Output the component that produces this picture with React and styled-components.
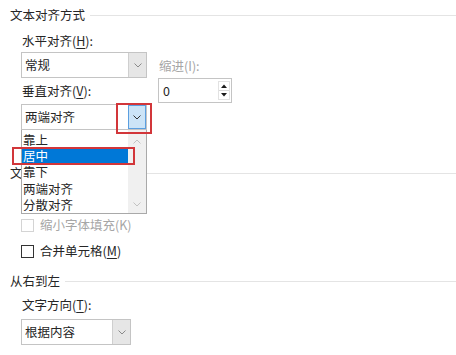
import React from "react";
import styled, { createGlobalStyle } from "styled-components";

const Global = createGlobalStyle`
  html, body { margin: 0; padding: 0; background: #ffffff; }
  body { font-family: "Noto Sans CJK SC", "Noto Sans", sans-serif; }
`;

const Page = styled.div`
  width: 456px;
  height: 355px;
  overflow: hidden;
  box-sizing: border-box;
  padding: 6px 0 0 10px;
  background: #ffffff;
  color: #262626;
  font-size: 12.5px;
  line-height: 18px;
  position: relative;
`;

const SectionTitle = styled.div`
  display: flex;
  align-items: center;
  gap: 5px;
  height: 18px;
  margin-top: ${(p) => p.$mt || 0}px;
  white-space: nowrap;
  &::after {
    content: "";
    flex: 1;
    height: 1px;
    background: #e4e4e4;
  }
`;

const Key = styled.span`
  text-decoration: underline;
  text-underline-offset: 2px;
`;

const AlignRow = styled.div`
  display: flex;
  gap: 11px;
  padding-left: 11px;
  margin-top: 8px;
`;

const Column = styled.div`
  display: flex;
  flex-direction: column;
  width: 126px;
`;

const IndentColumn = styled.div`
  display: flex;
  flex-direction: column;
  padding-top: 25px;
`;

const FieldLabel = styled.div`
  height: 18px;
  padding-left: 1px;
  margin-top: ${(p) => p.$mt || 0}px;
  color: ${(p) => (p.$disabled ? "#a6a6a6" : "#262626")};
  white-space: nowrap;
`;

const SelectWrap = styled.div`
  position: relative;
  width: ${(p) => p.$w}px;
  margin-top: ${(p) => p.$mt || 0}px;
`;

const SelectBox = styled.div`
  display: flex;
  align-items: stretch;
  box-sizing: border-box;
  width: 100%;
  height: 26px;
  border: 1px solid #c4c4c4;
  background: #ffffff;
`;

const SelectValue = styled.div`
  flex: 1;
  padding-left: 3px;
  line-height: 24px;
  white-space: nowrap;
`;

const DropButton = styled.div`
  width: 18px;
  display: flex;
  align-items: center;
  justify-content: center;
  box-sizing: border-box;
  background: ${(p) => (p.$active ? "#cce4f7" : "#e6e6e6")};
  border-left: 1px solid ${(p) => (p.$active ? "#5b9fe0" : "#cfcfcf")};
  ${(p) => p.$active && "border: 1px solid #5b9fe0; margin: 0 0 0 0;"}
`;

const Chevron = ({ color = "#8a8a8a", up = false }) => (
  <svg width="8" height="5" viewBox="0 0 8 5">
    <polyline
      points={up ? "0.5,4.5 4,1 7.5,4.5" : "0.5,0.5 4,4 7.5,0.5"}
      fill="none"
      stroke={color}
      strokeWidth="1"
    />
  </svg>
);

const DropList = styled.div`
  position: absolute;
  left: 0;
  top: 26px;
  width: 126px;
  height: 84px;
  box-sizing: border-box;
  border: 1px solid #a9a9a9;
  border-top: none;
  background: #ffffff;
  display: flex;
  z-index: 2;
`;

const ListItems = styled.div`
  flex: 1;
  padding-top: 2px;
  display: flex;
  flex-direction: column;
`;

const ListItem = styled.div`
  height: 16.4px;
  line-height: 16px;
  padding-left: 1px;
  background: ${(p) => (p.$selected ? "#0078d7" : "transparent")};
  color: ${(p) => (p.$selected ? "#ffffff" : "#262626")};
  white-space: nowrap;
`;

const ScrollBar = styled.div`
  width: 18px;
  background: #f0f0f0;
  display: flex;
  flex-direction: column;
  justify-content: space-between;
  align-items: center;
  padding: 9px 0 6px;
`;

const RedFrame = styled.div`
  position: absolute;
  left: ${(p) => p.$x}px;
  top: ${(p) => p.$y}px;
  width: ${(p) => p.$w}px;
  height: ${(p) => p.$h}px;
  box-sizing: border-box;
  border: 2px solid #d2363a;
  z-index: 3;
  pointer-events: none;
`;

const SpinBox = styled.div`
  display: flex;
  box-sizing: border-box;
  width: 74px;
  height: 25px;
  margin-top: 3px;
  border: 1px solid #c4c4c4;
  background: #ffffff;
`;

const SpinValue = styled.div`
  flex: 1;
  padding-left: 4px;
  line-height: 23px;
`;

const SpinButtons = styled.div`
  width: 10px;
  margin: 2px 1px 2px 0;
  display: flex;
  flex-direction: column;
  border: 1px solid #e2e2e2;
`;

const SpinHalf = styled.div`
  flex: 1;
  display: flex;
  align-items: center;
  justify-content: center;
  & + & { border-top: 1px solid #d8d8d8; }
`;

const Triangle = ({ up }) => (
  <svg width="6" height="4" viewBox="0 0 6 4">
    <polygon points={up ? "0,4 3,0.5 6,4" : "0,0 6,0 3,3.5"} fill="#1a1a1a" />
  </svg>
);

const CheckList = styled.div`
  margin-top: 4px;
  padding-left: 11px;
  display: flex;
  flex-direction: column;
`;

const CheckRow = styled.div`
  display: flex;
  align-items: center;
  gap: 6px;
  height: 26px;
  color: ${(p) => (p.$disabled ? "#a6a6a6" : "#262626")};
`;

const CheckBox = styled.span`
  display: inline-block;
  width: 13px;
  height: 13px;
  box-sizing: border-box;
  border: 1px solid ${(p) => (p.$disabled ? "#d4d4d4" : "#333333")};
  background: #ffffff;
`;

const Indented = styled.div`
  padding-left: 11px;
  display: flex;
  flex-direction: column;
`;

function Select({ value, width, active, mt, children }) {
  return (
    <SelectWrap $w={width} $mt={mt}>
      <SelectBox>
        <SelectValue>{value}</SelectValue>
        <DropButton $active={active}>
          <Chevron color={active ? "#333333" : "#8a8a8a"} />
        </DropButton>
      </SelectBox>
      {children}
    </SelectWrap>
  );
}

const options = ["靠上", "居中", "靠下", "两端对齐", "分散对齐"];

export default function App() {
  return (
    <>
      <Global />
      <Page>
        <SectionTitle>文本对齐方式</SectionTitle>
        <AlignRow>
          <Column>
            <FieldLabel>
              水平对齐(<Key>H</Key>):
            </FieldLabel>
            <Select value="常规" width={126} mt={2} />
            <FieldLabel $mt={4}>
              垂直对齐(<Key>V</Key>):
            </FieldLabel>
            <Select value="两端对齐" width={126} mt={4} active>
              <DropList>
                <ListItems>
                  {options.map((o) => (
                    <ListItem key={o} $selected={o === "居中"}>
                      {o}
                    </ListItem>
                  ))}
                </ListItems>
                <ScrollBar>
                  <Chevron color="#c2c2c2" up />
                  <Chevron color="#c2c2c2" />
                </ScrollBar>
              </DropList>
              <RedFrame $x={95} $y={-1} $w={36} $h={31} />
              <RedFrame $x={-9} $y={43} $w={123} $h={18} />
            </Select>
          </Column>
          <IndentColumn>
            <FieldLabel $disabled>缩进(I):</FieldLabel>
            <SpinBox>
              <SpinValue>0</SpinValue>
              <SpinButtons>
                <SpinHalf>
                  <Triangle up />
                </SpinHalf>
                <SpinHalf>
                  <Triangle />
                </SpinHalf>
              </SpinButtons>
            </SpinBox>
          </IndentColumn>
        </AlignRow>

        <SectionTitle $mt={34}>文本控制</SectionTitle>
        <CheckList>
          <CheckRow>
            <CheckBox />
            <span>
              自动换行(<Key>W</Key>)
            </span>
          </CheckRow>
          <CheckRow $disabled>
            <CheckBox $disabled />
            <span>缩小字体填充(K)</span>
          </CheckRow>
          <CheckRow>
            <CheckBox />
            <span>
              合并单元格(<Key>M</Key>)
            </span>
          </CheckRow>
        </CheckList>

        <SectionTitle $mt={8}>从右到左</SectionTitle>
        <Indented>
          <FieldLabel $mt={6}>
            文字方向(<Key>T</Key>):
          </FieldLabel>
          <Select value="根据内容" width={110} mt={5} />
        </Indented>
      </Page>
    </>
  );
}
